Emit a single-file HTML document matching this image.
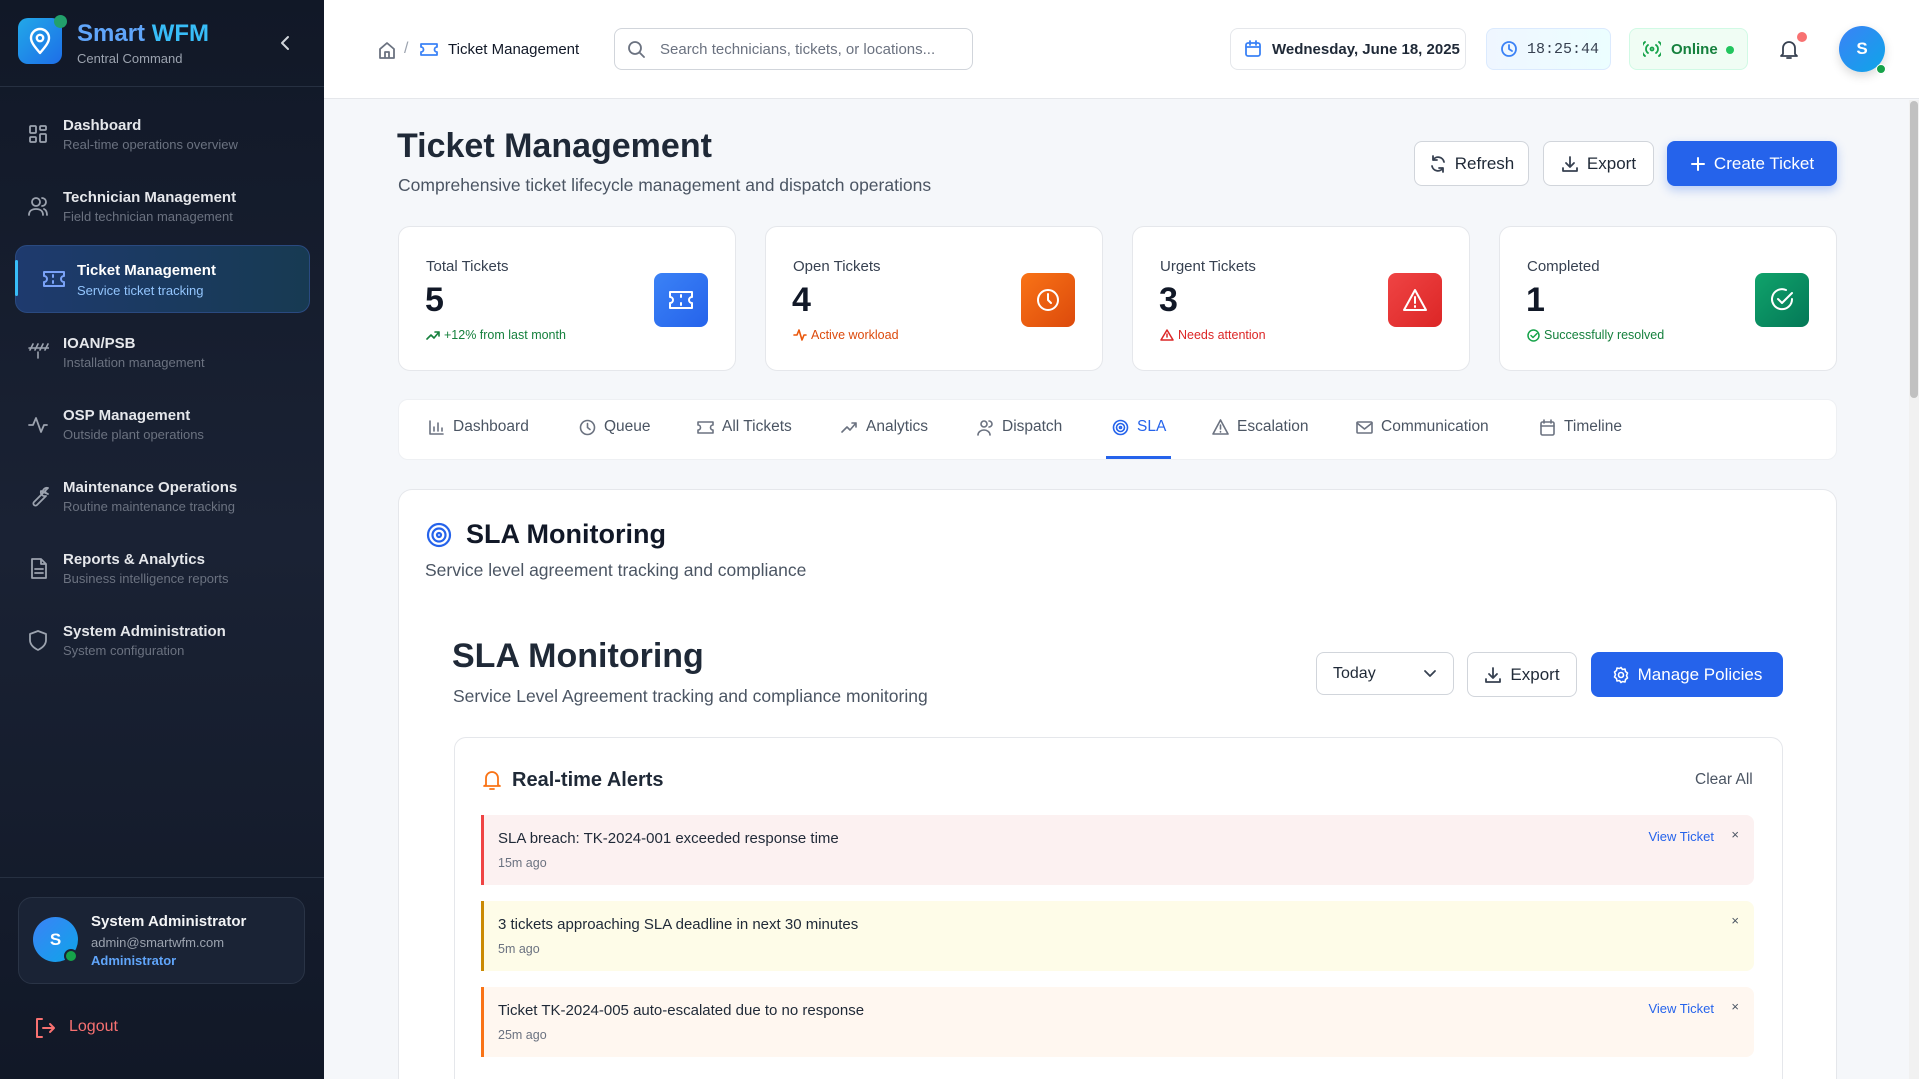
<!DOCTYPE html>
<html style="width:1919px;height:1079px;overflow:hidden"><head><meta charset="utf-8"><style>
*{box-sizing:border-box;margin:0;padding:0}
html,body{width:1919px;height:1079px;overflow:hidden}
body{font-family:"Liberation Sans",sans-serif;background:#f5f7fa;position:relative;color:#111827}
.abs{position:absolute}
#sb{left:0;top:0;width:324px;height:1079px;background:linear-gradient(180deg,#111827 0%,#1a2234 50%,#111827 100%)}
.nav .t{position:absolute;left:63px;font-size:15px;font-weight:bold;color:#e5e7eb;white-space:nowrap}
.nav .s{position:absolute;left:63px;font-size:13px;color:#6b7280;white-space:nowrap}
.nav svg{position:absolute;left:27px}
svg{fill:none;stroke-linecap:round;stroke-linejoin:round}
.btn{position:absolute;border:1px solid #d1d5db;border-radius:8px;background:#fff;font-size:17px;color:#1f2937;display:flex;align-items:center;justify-content:center;gap:8px}
.card{position:absolute;top:226px;width:338px;height:145px;background:#fff;border:1px solid #e5e7eb;border-radius:12px}
.card .l{position:absolute;left:27px;top:31px;font-size:15px;color:#374151}
.card .n{position:absolute;left:26px;top:54px;font-size:34px;font-weight:bold;color:#111827}
.card .sub{position:absolute;left:27px;top:101px;font-size:12.5px;display:flex;align-items:center;gap:4px}
.card .ic{position:absolute;right:27px;top:46px;width:54px;height:54px;border-radius:8px;display:flex;align-items:center;justify-content:center}
.tab{position:absolute;top:418px;font-size:15.5px;color:#4b5563;display:flex;align-items:center;gap:8px;white-space:nowrap}
.alert{position:absolute;left:481px;width:1273px;height:70px;border-radius:0 8px 8px 0;border-left:3px solid}
.alert .a1{position:absolute;left:14px;top:15px;font-size:15px;color:#1f2937}
.alert .a2{position:absolute;left:14px;top:41px;font-size:12.5px;color:#6b7280}
.alert .vt{position:absolute;right:40px;top:14px;font-size:13px;color:#2563eb}
.alert .x{position:absolute;right:15px;top:12px;font-size:13px;color:#4b5563}
</style></head><body>
<div id="sb" class="abs">
  <div class="abs" style="left:18px;top:18px;width:44px;height:46px;border-radius:10px;background:linear-gradient(135deg,#22a8e8,#1d6ee8)">
    <svg width="44" height="46" viewBox="0 0 44 46" stroke="#fff" stroke-width="2.4"><path d="M22 35c-6-7-9-11-9-15a9 9 0 0 1 18 0c0 4-3 8-9 15z"/><circle cx="22" cy="20" r="3.2"/></svg>
  </div>
  <div class="abs" style="left:54px;top:15px;width:13px;height:13px;border-radius:50%;background:#22a06b"></div>
  <div class="abs" style="left:77px;top:20px;font-size:24px;font-weight:bold;color:#60a5fa">Smart <span style="color:#38bdf8">WFM</span></div>
  <div class="abs" style="left:77px;top:51px;font-size:13px;color:#9ca3af">Central Command</div>
  <svg class="abs" style="left:278px;top:35px" width="14" height="16" stroke="#d1d5db" stroke-width="2"><path d="M10 2 4 8l6 6"/></svg>
  <div class="abs" style="left:0;top:86px;width:324px;height:1px;background:#263041"></div>
  <div class="abs" style="left:15px;top:245px;width:295px;height:68px;border-radius:12px;background:linear-gradient(90deg,#1e3a6e,#173a52);border:1px solid #2a4a80"></div>
  <div class="abs" style="left:15px;top:260px;width:3px;height:36px;background:#38bdf8;border-radius:2px"></div>
  <div class="nav">
    <svg style="top:123px" width="22" height="22" stroke="#9ca3af" stroke-width="1.8"><rect x="3" y="3" width="6" height="7" rx="1"/><rect x="13" y="3" width="6" height="4" rx="1"/><rect x="13" y="11" width="6" height="8" rx="1"/><rect x="3" y="14" width="6" height="5" rx="1"/></svg>
    <div class="t" style="top:117px">Dashboard</div><div class="s" style="top:137px">Real-time operations overview</div>
    <svg style="top:195px" width="22" height="22" stroke="#9ca3af" stroke-width="1.8"><circle cx="9" cy="7" r="4"/><path d="M2 20c0-4 3-6 7-6s7 2 7 6M15 3a4 4 0 0 1 0 8M20 20c0-3-1-5-3-6"/></svg>
    <div class="t" style="top:189px">Technician Management</div><div class="s" style="top:209px">Field technician management</div>
    <svg style="left:42px;top:268px;position:absolute" width="24" height="22" stroke="#7aa2f7" stroke-width="2"><path d="M2 4h20v4a3 3 0 0 0 0 6v4H2v-4a3 3 0 0 0 0-6z M11 7v2M11 13v2"/></svg>
    <div class="t" style="top:262px;left:77px;color:#fff">Ticket Management</div><div class="s" style="top:283px;left:77px;color:#93c5fd">Service ticket tracking</div>
    <svg style="top:340px" width="22" height="22" stroke="#9ca3af" stroke-width="1.6"><path d="M3 10l3-6M8 10l3-6M13 10l3-6M18 10l3-6M2 8h20M11 12v6"/></svg>
    <div class="t" style="top:335px">IOAN/PSB</div><div class="s" style="top:355px">Installation management</div>
    <svg style="top:413px" width="22" height="22" stroke="#9ca3af" stroke-width="1.8"><path d="M2 12h4l3-7 5 14 3-7h3"/></svg>
    <div class="t" style="top:407px">OSP Management</div><div class="s" style="top:427px">Outside plant operations</div>
    <svg style="top:485px" width="22" height="22" stroke="#9ca3af" stroke-width="1.8"><path d="M14 6a4 4 0 0 0 5 5l-9 9a2 2 0 0 1-3-3l9-9a4 4 0 0 1 5-5l-3 3 1 2 2 1z"/></svg>
    <div class="t" style="top:479px">Maintenance Operations</div><div class="s" style="top:499px">Routine maintenance tracking</div>
    <svg style="top:557px" width="22" height="22" stroke="#9ca3af" stroke-width="1.8"><path d="M5 2h9l5 5v14H5z M14 2v5h5M8 12h8M8 16h8"/></svg>
    <div class="t" style="top:551px">Reports &amp; Analytics</div><div class="s" style="top:571px">Business intelligence reports</div>
    <svg style="top:629px" width="22" height="22" stroke="#9ca3af" stroke-width="1.8"><path d="M11 2l8 3v6c0 5-4 8-8 10-4-2-8-5-8-10V5z"/></svg>
    <div class="t" style="top:623px">System Administration</div><div class="s" style="top:643px">System configuration</div>
  </div>
  <div class="abs" style="left:0;top:877px;width:324px;height:1px;background:#263041"></div>
  <div class="abs" style="left:18px;top:897px;width:287px;height:87px;border-radius:14px;background:#1a2335;border:1px solid #2a3446"></div>
  <div class="abs" style="left:33px;top:917px;width:45px;height:45px;border-radius:50%;background:linear-gradient(135deg,#3b82f6,#0ea5e9);color:#fff;font-weight:bold;font-size:17px;display:flex;align-items:center;justify-content:center">S</div>
  <div class="abs" style="left:64px;top:949px;width:14px;height:14px;border-radius:50%;background:#16a34a;border:2px solid #1a2335"></div>
  <div class="abs" style="left:91px;top:913px;font-size:15px;font-weight:bold;color:#f3f4f6">System Administrator</div>
  <div class="abs" style="left:91px;top:935px;font-size:13px;color:#9ca3af">admin@smartwfm.com</div>
  <div class="abs" style="left:91px;top:953px;font-size:13px;color:#60a5fa;font-weight:bold">Administrator</div>
  <svg class="abs" style="left:33px;top:1016px" width="24" height="24" stroke="#f87171" stroke-width="2"><path d="M9 3H4v18h5M10 12h11M17 8l4 4-4 4"/></svg>
  <div class="abs" style="left:69px;top:1018px;font-size:16px;color:#f87171">Logout</div>
</div>

<div class="abs" style="left:324px;top:0;width:1595px;height:99px;background:#fff;border-bottom:1px solid #e5e7eb"></div>
<svg class="abs" style="left:377px;top:40px" width="20" height="20" stroke="#6b7280" stroke-width="1.8"><path d="M3 9l7-6 7 6v9H3z M8 18v-6h4v6"/></svg>
<div class="abs" style="left:404px;top:40px;font-size:16px;color:#9ca3af">/</div>
<svg class="abs" style="left:420px;top:41px" width="18" height="17" stroke="#3b82f6" stroke-width="1.8"><path d="M1 3h16v3a2.5 2.5 0 0 0 0 5v3H1v-3a2.5 2.5 0 0 0 0-5z"/></svg>
<div class="abs" style="left:448px;top:41px;font-size:15px;color:#111827">Ticket Management</div>
<div class="abs" style="left:614px;top:28px;width:359px;height:42px;border:1px solid #d1d5db;border-radius:8px;background:#fff"></div>
<svg class="abs" style="left:627px;top:40px" width="18" height="18" stroke="#6b7280" stroke-width="1.8"><circle cx="8" cy="8" r="6"/><path d="M13 13l4 4"/></svg>
<div class="abs" style="left:660px;top:41px;font-size:15px;color:#6b7280">Search technicians, tickets, or locations...</div>
<div class="abs" style="left:1230px;top:28px;width:236px;height:42px;border:1px solid #e5e7eb;border-radius:8px;background:#fff"></div>
<svg class="abs" style="left:1244px;top:40px" width="18" height="18" stroke="#3b82f6" stroke-width="1.8"><rect x="2" y="3" width="14" height="13" rx="2"/><path d="M2 7h14M6 1v4M12 1v4"/></svg>
<div class="abs" style="left:1272px;top:41px;font-size:15px;font-weight:bold;color:#1f2937">Wednesday, June 18, 2025</div>
<div class="abs" style="left:1486px;top:28px;width:125px;height:42px;border:1px solid #dbeafe;border-radius:8px;background:linear-gradient(90deg,#eff6ff,#ecfeff)"></div>
<svg class="abs" style="left:1500px;top:40px" width="18" height="18" stroke="#3b82f6" stroke-width="1.8"><circle cx="9" cy="9" r="7"/><path d="M9 5v4l3 2"/></svg>
<div class="abs" style="left:1527px;top:41px;font-size:15px;font-family:'Liberation Mono',monospace;color:#374151">18:25:44</div>
<div class="abs" style="left:1629px;top:28px;width:119px;height:42px;border:1px solid #d1fae5;border-radius:8px;background:#f0fdf4"></div>
<svg class="abs" style="left:1643px;top:41px" width="18" height="16" stroke="#16a34a" stroke-width="1.8"><circle cx="9" cy="8" r="1.5"/><path d="M5 4a5 5 0 0 0 0 8M13 4a5 5 0 0 1 0 8M2 1a9 9 0 0 0 0 14M16 1a9 9 0 0 1 0 14"/></svg>
<div class="abs" style="left:1671px;top:41px;font-size:15px;font-weight:bold;color:#15803d">Online</div>
<div class="abs" style="left:1726px;top:46px;width:8px;height:8px;border-radius:50%;background:#22c55e"></div>
<svg class="abs" style="left:1778px;top:38px" width="22" height="22" stroke="#374151" stroke-width="1.8"><path d="M5 16V10a6 6 0 0 1 12 0v6l2 2H3z M9 20h4"/></svg>
<div class="abs" style="left:1797px;top:32px;width:10px;height:10px;border-radius:50%;background:#f87171"></div>
<div class="abs" style="left:1839px;top:26px;width:46px;height:46px;border-radius:50%;background:linear-gradient(135deg,#3b82f6,#0ea5e9);color:#fff;font-weight:bold;font-size:17px;display:flex;align-items:center;justify-content:center;box-shadow:0 4px 10px rgba(0,0,0,.15)">S</div>
<div class="abs" style="left:1876px;top:64px;width:10px;height:10px;border-radius:50%;background:#16a34a;border:1px solid #fff"></div>

<div class="abs" style="left:1909px;top:100px;width:10px;height:979px;background:#f1f1f1"></div>
<div class="abs" style="left:1910px;top:101px;width:8px;height:297px;background:#c1c1c1;border-radius:4px"></div>

<div class="abs" style="left:397px;top:127px;font-size:34px;font-weight:bold;color:#1f2937">Ticket Management</div>
<div class="abs" style="left:398px;top:175px;font-size:17.5px;color:#4b5563">Comprehensive ticket lifecycle management and dispatch operations</div>
<div class="btn" style="left:1414px;top:141px;width:115px;height:45px"><svg width="18" height="18" stroke="#374151" stroke-width="1.8"><path d="M15 7a6 6 0 0 0-11-2M3 11a6 6 0 0 0 11 2M4 1v4h4M14 17v-4h-4"/></svg>Refresh</div>
<div class="btn" style="left:1543px;top:141px;width:111px;height:45px"><svg width="18" height="18" stroke="#374151" stroke-width="1.8"><path d="M9 2v10M5 8l4 4 4-4M2 13v3h14v-3"/></svg>Export</div>
<div class="btn" style="left:1667px;top:141px;width:170px;height:45px;background:#2563eb;border-color:#2563eb;color:#fff;box-shadow:0 4px 10px rgba(37,99,235,.3)"><svg width="16" height="16" stroke="#fff" stroke-width="2"><path d="M8 2v12M2 8h12"/></svg>Create Ticket</div>

<div class="card" style="left:398px"><div class="l">Total Tickets</div><div class="n">5</div><div class="sub" style="color:#15803d"><svg width="14" height="12" stroke="#15803d" stroke-width="1.6"><path d="M1 10l4-4 3 3 5-6M9 3h4v4"/></svg>+12% from last month</div><div class="ic" style="background:linear-gradient(135deg,#3b82f6,#2563eb)"><svg width="26" height="22" stroke="#fff" stroke-width="2"><path d="M2 3h22v5a3 3 0 0 0 0 6v5H2v-5a3 3 0 0 0 0-6z M13 6v2M13 14v2"/></svg></div></div>
<div class="card" style="left:765px"><div class="l">Open Tickets</div><div class="n">4</div><div class="sub" style="color:#dc4a0c"><svg width="14" height="12" stroke="#ea580c" stroke-width="1.6"><path d="M1 6h3l2-5 3 10 2-5h2"/></svg>Active workload</div><div class="ic" style="background:linear-gradient(135deg,#f97316,#dc4a0c)"><svg width="26" height="26" stroke="#fff" stroke-width="2"><circle cx="13" cy="13" r="10"/><path d="M13 7v6l3 3"/></svg></div></div>
<div class="card" style="left:1132px"><div class="l">Urgent Tickets</div><div class="n">3</div><div class="sub" style="color:#dc2626"><svg width="14" height="12" stroke="#dc2626" stroke-width="1.5"><path d="M7 1l6 10H1z M7 5v3"/></svg>Needs attention</div><div class="ic" style="background:linear-gradient(135deg,#ef4444,#dc2626)"><svg width="26" height="24" stroke="#fff" stroke-width="2"><path d="M13 2l11 20H2z M13 9v6M13 18v1"/></svg></div></div>
<div class="card" style="left:1499px"><div class="l">Completed</div><div class="n">1</div><div class="sub" style="color:#15803d"><svg width="13" height="13" stroke="#16a34a" stroke-width="1.5"><circle cx="6.5" cy="6.5" r="5.5"/><path d="M4 6.5l2 2 4-4"/></svg>Successfully resolved</div><div class="ic" style="background:linear-gradient(135deg,#10a36b,#047857)"><svg width="26" height="26" stroke="#fff" stroke-width="2"><path d="M23 12a10 10 0 1 1-6-9M9 12l4 4 10-10"/></svg></div></div>

<div class="abs" style="left:398px;top:399px;width:1439px;height:61px;background:#fff;border:1px solid #eef0f3;border-radius:10px"></div>
<div class="tab" style="left:428px"><svg width="17" height="17" stroke="#6b7280" stroke-width="1.6"><path d="M2 2v13h13M6 12V8M10 12V4M14 12V9"/></svg>Dashboard</div>
<div class="tab" style="left:579px"><svg width="17" height="17" stroke="#6b7280" stroke-width="1.6"><circle cx="8.5" cy="8.5" r="7"/><path d="M8.5 4.5v4l2.5 2"/></svg>Queue</div>
<div class="tab" style="left:697px"><svg width="17" height="17" stroke="#6b7280" stroke-width="1.6"><path d="M1 3h15v3a2 2 0 0 0 0 5v3H1v-3a2 2 0 0 0 0-5z"/></svg>All Tickets</div>
<div class="tab" style="left:841px"><svg width="17" height="17" stroke="#6b7280" stroke-width="1.6"><path d="M1 13l5-5 3 3 6-7M11 4h4v4"/></svg>Analytics</div>
<div class="tab" style="left:977px"><svg width="17" height="17" stroke="#6b7280" stroke-width="1.6"><circle cx="7" cy="5" r="3"/><path d="M1 16c0-3 3-5 6-5s6 2 6 5M12 2a3 3 0 0 1 0 6"/></svg>Dispatch</div>
<div class="tab" style="left:1112px;color:#2563eb"><svg width="17" height="17" stroke="#2563eb" stroke-width="1.6"><circle cx="8.5" cy="8.5" r="7"/><circle cx="8.5" cy="8.5" r="4"/><circle cx="8.5" cy="8.5" r="1"/></svg>SLA</div>
<div class="abs" style="left:1106px;top:456px;width:65px;height:3px;background:#2563eb"></div>
<div class="tab" style="left:1212px"><svg width="17" height="17" stroke="#6b7280" stroke-width="1.6"><path d="M8.5 1l7.5 14H1z M8.5 6v4M8.5 12.5v.5"/></svg>Escalation</div>
<div class="tab" style="left:1356px"><svg width="17" height="17" stroke="#6b7280" stroke-width="1.6"><rect x="1" y="3" width="15" height="11" rx="1"/><path d="M1 4l7.5 6L16 4"/></svg>Communication</div>
<div class="tab" style="left:1539px"><svg width="17" height="17" stroke="#6b7280" stroke-width="1.6"><rect x="2" y="3" width="13" height="13" rx="1.5"/><path d="M2 7h13M5 1v3M12 1v3"/></svg>Timeline</div>

<div class="abs" style="left:398px;top:489px;width:1439px;height:590px;background:#fff;border:1px solid #e5e7eb;border-bottom:none;border-radius:14px 14px 0 0"></div>
<svg class="abs" style="left:426px;top:522px" width="26" height="26" stroke="#2563eb" stroke-width="2.2"><circle cx="13" cy="13" r="11"/><circle cx="13" cy="13" r="6.5"/><circle cx="13" cy="13" r="2"/></svg>
<div class="abs" style="left:466px;top:519px;font-size:27px;font-weight:bold;color:#111827">SLA Monitoring</div>
<div class="abs" style="left:425px;top:560px;font-size:17.5px;color:#4b5563">Service level agreement tracking and compliance</div>
<div class="abs" style="left:452px;top:637px;font-size:34px;font-weight:bold;color:#1f2937">SLA Monitoring</div>
<div class="abs" style="left:453px;top:686px;font-size:17.5px;color:#4b5563">Service Level Agreement tracking and compliance monitoring</div>
<div class="btn" style="left:1316px;top:652px;width:138px;height:43px;justify-content:space-between;padding:0 16px;font-size:16px"><span>Today</span><svg width="14" height="10" stroke="#374151" stroke-width="1.8"><path d="M2 2l5 5 5-5"/></svg></div>
<div class="btn" style="left:1467px;top:652px;width:110px;height:45px"><svg width="18" height="18" stroke="#374151" stroke-width="1.8"><path d="M9 2v10M5 8l4 4 4-4M2 13v3h14v-3"/></svg>Export</div>
<div class="btn" style="left:1591px;top:652px;width:192px;height:45px;background:#2563eb;border-color:#2563eb;color:#fff"><svg width="18" height="18" stroke="#fff" stroke-width="1.6"><circle cx="9" cy="9" r="2.5"/><path d="M9 1.5l1.5 2 2.5-.5.5 2.5 2 1.5-1 2.5 1 2.5-2 1.5-.5 2.5-2.5-.5L9 16.5l-1.5-2-2.5.5-.5-2.5-2-1.5 1-2.5-1-2.5 2-1.5.5-2.5 2.5.5z"/></svg>Manage Policies</div>

<div class="abs" style="left:454px;top:737px;width:1329px;height:342px;background:#fff;border:1px solid #e5e7eb;border-bottom:none;border-radius:12px 12px 0 0"></div>
<svg class="abs" style="left:482px;top:769px" width="20" height="22" stroke="#f97316" stroke-width="1.8"><path d="M4 16V9a6 6 0 0 1 12 0v7l2 1H2z M8 20h4"/></svg>
<div class="abs" style="left:512px;top:769px;font-size:20px;font-weight:bold;color:#1f2937">Real-time Alerts</div>
<div class="abs" style="left:1695px;top:771px;font-size:15.5px;color:#4b5563">Clear All</div>
<div class="alert" style="top:815px;background:#fcf1f1;border-color:#ef4444"><div class="a1">SLA breach: TK-2024-001 exceeded response time</div><div class="a2">15m ago</div><div class="vt">View Ticket</div><div class="x">×</div></div>
<div class="alert" style="top:901px;background:#fefce8;border-color:#ca8a04"><div class="a1">3 tickets approaching SLA deadline in next 30 minutes</div><div class="a2">5m ago</div><div class="x">×</div></div>
<div class="alert" style="top:987px;background:#fff7f0;border-color:#f97316"><div class="a1">Ticket TK-2024-005 auto-escalated due to no response</div><div class="a2">25m ago</div><div class="vt">View Ticket</div><div class="x">×</div></div>
</body></html>
